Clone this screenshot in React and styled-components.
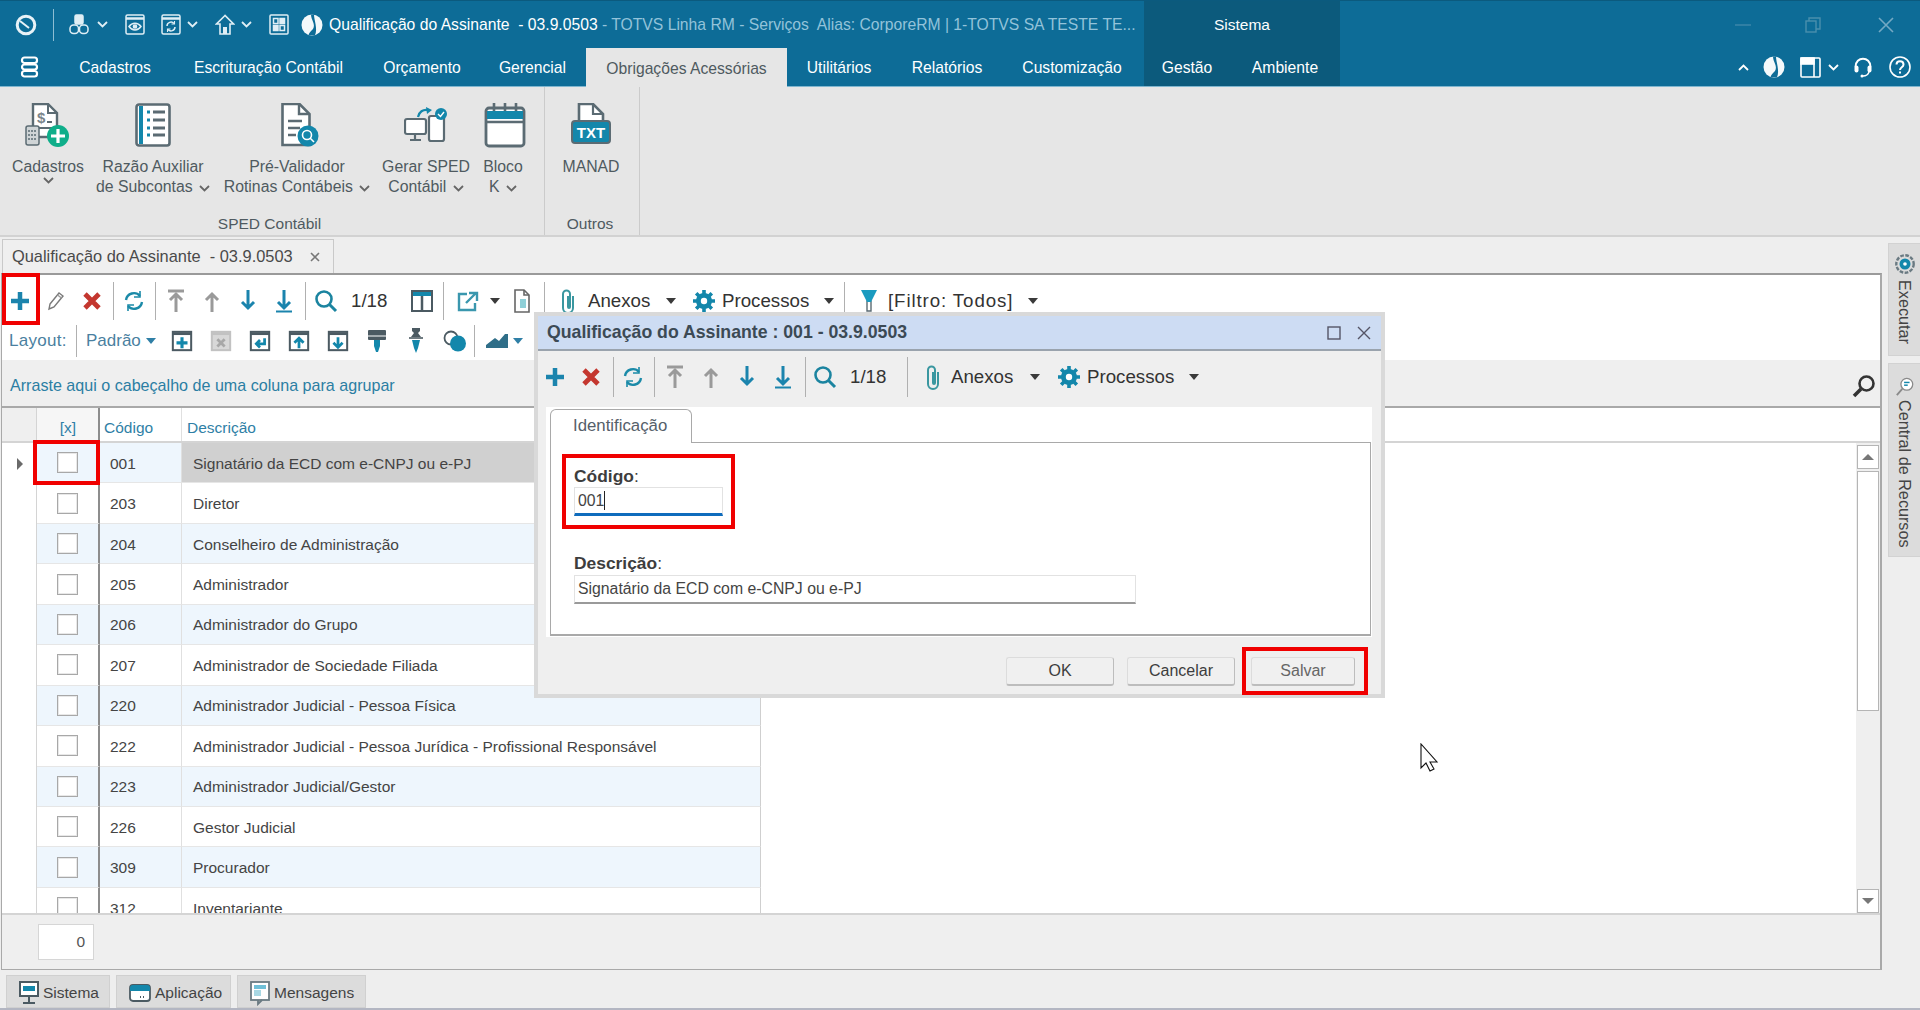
import React from 'react';
import styled, { createGlobalStyle } from 'styled-components';

const FONT = '"Liberation Sans", Arial, sans-serif';
const TEAL = '#1387ab';
const SLATE = '#5b6b73';

const Global = createGlobalStyle`
  html, body { margin: 0; padding: 0; background: #eee; }
  * { box-sizing: border-box; }
  body { font-family: ${FONT}; font-size: 15.5px; color: #444; overflow: hidden; }
`;

const Page = styled.div`
  position: relative;
  width: 1920px;
  height: 1010px;
  overflow: hidden;
  display: flex;
  flex-direction: column;
`;

// Title bar + ribbon tabs
const Head = styled.div`
  position: relative;
  height: 87px;
  background: #0d6c97;
  border-top: 1px solid #0b5a7e;
  border-bottom: 1px solid #7fb6cf;
  flex: none;
`;
const ContextBlock = styled.div`
  position: absolute;
  left: 1144px;
  top: 0;
  width: 196px;
  height: 85px;
  background: #0c5a7c;
`;
const TitleRow = styled.div`
  position: relative;
  height: 47px;
  display: flex;
  align-items: center;
  color: #fff;
  white-space: nowrap;
`;
const Slot = styled.div`
  width: ${(p) => p.$w || 36}px;
  margin-left: ${(p) => p.$ml || 0}px;
  flex: none;
  display: flex;
  align-items: center;
  justify-content: center;
`;
const HeadSep = styled.div`
  width: 1px;
  height: 32px;
  background: #8dbdd3;
  flex: none;
`;
const TitleText = styled.div`
  width: 815px;
  flex: none;
  font-size: 15.7px;
  overflow: hidden;
  color: #fff;
  span { color: #93c3da; }
`;
const ContextLabel = styled.div`
  width: 196px;
  flex: none;
  text-align: center;
  font-size: 15.5px;
  color: #fff;
`;
const TabRow = styled.div`
  position: relative;
  height: 38px;
  display: flex;
  align-items: stretch;
`;
const RibbonTab = styled.div`
  width: ${(p) => p.$w}px;
  flex: none;
  display: flex;
  align-items: center;
  justify-content: center;
  padding-top: 2px;
  font-size: 15.7px;
  white-space: nowrap;
  color: ${(p) => (p.$active ? '#4f5a60' : '#fff')};
  background: ${(p) => (p.$active ? '#e6e6e6' : 'transparent')};
  height: ${(p) => (p.$active ? '39px' : 'auto')};
`;

// Ribbon
const Ribbon = styled.div`
  height: 150px;
  flex: none;
  background: #e6e6e6;
  border-bottom: 2px solid #d2d2d2;
  display: flex;
`;
const Group = styled.div`
  width: ${(p) => p.$w}px;
  flex: none;
  border-right: 1px solid #cbcbcb;
  display: flex;
  flex-direction: column;
`;
const GroupItems = styled.div`
  flex: 1;
  display: flex;
`;
const GroupLabel = styled.div`
  height: 23px;
  text-align: center;
  font-size: 15.5px;
  color: #4f5a60;
  line-height: 23px;
  padding-right: ${(p) => p.$pr || 0}px;
`;
const RibbonButton = styled.div`
  width: ${(p) => p.$w}px;
  flex: none;
  display: flex;
  flex-direction: column;
  align-items: center;
  padding-top: 16px;
  color: #4f5a60;
  font-size: 15.8px;
  line-height: 20px;
  text-align: center;
  white-space: nowrap;
`;
const RibbonIcon = styled.div`
  height: 44px;
  margin-bottom: 10px;
  margin-left: ${(p) => p.$ml || 0}px;
  display: flex;
  align-items: center;
`;

// Work area
const Work = styled.div`
  flex: 1;
  display: flex;
  min-height: 0;
`;
const WorkMain = styled.div`
  width: 1882px;
  flex: none;
  display: flex;
  flex-direction: column;
`;
const DocStrip = styled.div`
  height: 36px;
  flex: none;
  padding-left: 2px;
  padding-top: 2px;
  display: flex;
`;
const DocTab = styled.div`
  width: 332px;
  border: 1px solid #c9c9c9;
  border-bottom: none;
  background: #efefef;
  display: flex;
  align-items: center;
  padding: 0 12px 0 9px;
  justify-content: space-between;
  font-size: 16.4px;
  color: #4a4a4a;
`;
const Panel = styled.div`
  height: 697px;
  flex: none;
  margin-left: 1px;
  display: flex;
  flex-direction: column;
  border: 2px solid #a9a9a9;
  border-top-color: #9a9a9a;
  border-bottom-width: 1px;
  border-left-width: 1px;
  background: #fff;
`;
const Toolbar = styled.div`
  height: ${(p) => p.$h}px;
  padding-top: ${(p) => p.$pt || 0}px;
  padding-bottom: ${(p) => p.$pb || 0}px;
  flex: none;
  display: flex;
  align-items: center;
  background: ${(p) => p.$bg || '#fff'};
  color: #333;
  font-size: 18.7px;
  white-space: nowrap;
`;
const Sep = styled.div`
  width: 1px;
  height: ${(p) => p.$h || 38}px;
  background: #b0b0b0;
  flex: none;
  margin: 0 ${(p) => p.$r ?? 2}px 0 ${(p) => p.$l ?? 3}px;
`;
const ToolText = styled.div`
  flex: none;
  width: ${(p) => p.$w}px;
  margin-left: ${(p) => p.$ml || 0}px;
  letter-spacing: ${(p) => p.$ls || 0}px;
`;
const Caret = styled.span`
  flex: none;
  width: 0;
  height: 0;
  border-left: 5px solid transparent;
  border-right: 5px solid transparent;
  border-top: 6px solid ${(p) => p.$color || '#3a3a3a'};
  margin-left: ${(p) => p.$ml || 0}px;
`;
const LayoutLabel = styled.div`
  flex: none;
  color: #4a7f9f;
  font-size: 17px;
  width: ${(p) => p.$w}px;
  margin-left: ${(p) => p.$ml || 0}px;
  letter-spacing: ${(p) => p.$ls || 0}px;
`;
const GroupBar = styled.div`
  height: 48px;
  flex: none;
  background: #efefef;
  border-bottom: 2px solid #a9a9a9;
  display: flex;
  align-items: center;
  justify-content: space-between;
  padding: 5px 4px 0 8px;
  font-size: 16.1px;
  color: #2b7ea3;
`;
const HeaderRow = styled.div`
  height: 35px;
  flex: none;
  display: grid;
  grid-template-columns: 35px 63px 82px 1fr;
  border-bottom: 2px solid #d4d4d4;
  background: #fff;
  font-size: 15.5px;
  color: #2f7fa6;
`;
const HeaderCell = styled.div`
  display: flex;
  align-items: center;
  padding-left: ${(p) => p.$pl || 4}px;
  padding-top: 6px;
  justify-content: ${(p) => (p.$center ? 'center' : 'flex-start')};
  background: ${(p) => p.$bg || '#fff'};
  border-right: ${(p) => p.$line || 'none'};
`;
const Body = styled.div`
  height: 470px;
  flex: none;
  display: flex;
  overflow: hidden;
`;
const Rows = styled.div`
  flex: 1;
  overflow: hidden;
  background: #fff;
`;
const Row = styled.div`
  display: grid;
  grid-template-columns: 35px 63px 82px 579px;
  height: 40.45px;
  background: #fff;
`;
const Cell = styled.div`
  display: flex;
  align-items: center;
  padding-left: ${(p) => p.$pl || 0}px;
  padding-top: ${(p) => (p.$center ? 0 : 2)}px;
  justify-content: ${(p) => (p.$center ? 'center' : 'flex-start')};
  background: ${(p) => (p.$selected ? '#d0d0d0' : p.$alt ? '#eef6fd' : '#fff')};
  border-bottom: 1px solid #e6e6e6;
  border-right: ${(p) => p.$line || 'none'};
  color: #444;
`;
const Indicator = styled(Cell)`
  background: #fff;
  border-bottom: none;
  border-right: 1px solid #d4d4d4;
`;
const Check = styled.span`
  width: 21px;
  height: 21px;
  background: #fff;
  border: 1px solid #a8a8a8;
  box-shadow: inset 0 0 0 1px #e8e8e8;
`;
const RowArrow = styled.span`
  width: 0;
  height: 0;
  border-top: 6px solid transparent;
  border-bottom: 6px solid transparent;
  border-left: 6px solid #6a6a6a;
  margin-left: 15px;
`;
const Scrollbar = styled.div`
  width: 24px;
  flex: none;
  background: #efefef;
  display: flex;
  flex-direction: column;
  padding: 2px 1px 0 1px;
`;
const ScrollBtn = styled.div`
  height: 24px;
  flex: none;
  background: #fff;
  border: 1px solid #b5b5b5;
  display: flex;
  align-items: center;
  justify-content: center;
  color: #6d6d6d;
`;
const ScrollThumb = styled.div`
  height: 240px;
  flex: none;
  margin-top: 2px;
  background: #fff;
  border: 1px solid #b5b5b5;
`;
const ScrollTrack = styled.div`
  flex: 1;
`;
const Arrow = styled.span`
  width: 0;
  height: 0;
  border-left: 6px solid transparent;
  border-right: 6px solid transparent;
  ${(p) => (p.$up ? 'border-bottom: 6px solid #777;' : 'border-top: 6px solid #777;')}
`;
const Footer = styled.div`
  flex: 1;
  background: #efefef;
  border-top: 2px solid #d4d4d4;
  padding: 9px 0 0 36px;
`;
const TotalBox = styled.div`
  width: 56px;
  height: 36px;
  background: #fff;
  border: 1px solid #d6d6d6;
  display: flex;
  align-items: center;
  justify-content: flex-end;
  padding-right: 8px;
  font-size: 15.5px;
  color: #555;
`;
const StatusTabs = styled.div`
  flex: 1;
  display: flex;
  gap: 6px;
  padding: 5px 0 0 6px;
`;
const StatusTab = styled.div`
  width: ${(p) => p.$w}px;
  background: #dcdcdc;
  display: flex;
  align-items: center;
  padding-left: 11px;
  padding-top: 2px;
  gap: 3px;
  font-size: 15.5px;
  color: #444;
  height: 33px;
  border: 1px solid #d0d0d0;
`;
const BottomLine = styled.div`
  height: 2px;
  flex: none;
  background: #b3b6c2;
`;
const Side = styled.div`
  margin-left: 6px;
  width: 32px;
  flex: none;
  padding-top: 6px;
  display: flex;
  flex-direction: column;
  gap: 7px;
`;
const SideTab = styled.div`
  height: ${(p) => p.$h}px;
  background: #dcdcdc;
  border: 1px solid #d2d2d2;
  border-right: none;
  display: flex;
  flex-direction: column;
  align-items: center;
  padding-top: ${(p) => p.$pt}px;
  color: #444;
  font-size: 16.2px;
`;
const SideText = styled.div`
  writing-mode: vertical-rl;
  margin-top: ${(p) => p.$mt}px;
  white-space: nowrap;
`;

// Floating dialog
const Dialog = styled.div`
  position: absolute;
  left: 534px;
  top: 312px;
  width: 851px;
  height: 386px;
  border: 4px solid #d9d9d9;
  background: #efefef;
  display: flex;
  flex-direction: column;
`;
const DialogTitle = styled.div`
  height: 35px;
  flex: none;
  background: #cddcf3;
  border-bottom: 2px solid #9aa3ad;
  display: flex;
  align-items: center;
  justify-content: space-between;
  padding: 0 10px 0 9px;
  font-weight: bold;
  font-size: 17.7px;
  color: #3c4a55;
`;
const DialogControls = styled.div`
  display: flex;
  align-items: center;
  gap: 16px;
`;
const DialogPanel = styled.div`
  height: 230px;
  flex: none;
  margin: 0 9px 0 8px;
  background: #fff;
  padding: 2px 0 0 4px;
  display: flex;
  flex-direction: column;
`;
const PanelTab = styled.div`
  width: 142px;
  height: 34px;
  flex: none;
  border: 1px solid #a9a9a9;
  border-bottom: none;
  border-radius: 6px 6px 0 0;
  background: #fff;
  position: relative;
  z-index: 1;
  margin-bottom: -1px;
  padding: 6px 0 0 22px;
  font-size: 16.8px;
  color: #55606a;
`;
const PanelBody = styled.div`
  flex: 1;
  margin-right: 1px;
  margin-bottom: 1px;
  border: 1px solid #a9a9a9;
  border-bottom-width: 2px;
  padding: 24px 0 0 23px;
  display: flex;
  flex-direction: column;
`;
const FieldLabel = styled.div`
  font-weight: bold;
  font-size: 17.4px;
  line-height: 18px;
  color: #3d3d3d;
  span { font-weight: normal; }
`;
const Input = styled.div`
  width: ${(p) => p.$w}px;
  height: 29px;
  margin-top: ${(p) => p.$mt || 2}px;
  margin-bottom: ${(p) => p.$mb || 0}px;
  background: #fff;
  border: 1px solid #e2e2e2;
  border-bottom: ${(p) => (p.$focus ? '3px solid #0f6cbd' : '2px solid #9a9a9a')};
  padding: 0 3px;
  display: flex;
  align-items: center;
  font-size: 15.8px;
  color: #444;
`;
const Cursor = styled.span`
  width: 1px;
  height: 19px;
  background: #222;
`;
const DialogButtons = styled.div`
  flex: 1;
  display: flex;
  justify-content: flex-end;
  gap: 13px;
  padding: 20px 26px 0 0;
`;
const Button = styled.div`
  width: ${(p) => p.$w}px;
  height: 29px;
  background: #f0f0f0;
  border: 1px solid #dcdcdc;
  border-right-color: #bdbdbd;
  border-bottom: 2px solid #bdbdbd;
  border-radius: 3px;
  display: flex;
  align-items: center;
  justify-content: center;
  font-size: 16px;
  color: ${(p) => (p.$dim ? '#666' : '#3d3d3d')};
  margin-left: ${(p) => p.$ml || 0}px;
`;
const RedBox = styled.div`
  position: absolute;
  left: ${(p) => p.$x}px;
  top: ${(p) => p.$y}px;
  width: ${(p) => p.$w}px;
  height: ${(p) => p.$h}px;
  border: 4px solid #f00000;
  pointer-events: none;
`;
const MouseCursor = styled.svg`
  position: absolute;
  left: 1420px;
  top: 743px;
`;

// --- icons ---
const Chevron = ({ color = '#fff', up, ml = 0 }) => (
  <svg width="11" height="7" viewBox="0 0 11 7" style={{ marginLeft: ml, flex: 'none' }}>
    <path d={up ? 'M1 6l4.5-4.5L10 6' : 'M1 1l4.5 4.5L10 1'} fill="none" stroke={color} strokeWidth="1.8" />
  </svg>
);
const LogoRing = () => (
  <svg width="22" height="22" viewBox="0 0 22 22">
    <circle cx="11" cy="11" r="8.8" fill="none" stroke="#e8f2f7" strokeWidth="3" />
    <path d="M5 7l9 7" stroke="#e8f2f7" strokeWidth="2" />
  </svg>
);
const OrgIcon = () => (
  <svg width="20" height="21" viewBox="0 0 20 21" fill="none" stroke="#dfeef5" strokeWidth="1.5">
    <rect x="6" y="1" width="8" height="9" rx="1.5" fill="#dfeef5" />
    <rect x="1" y="11" width="8.5" height="8.5" rx="3.5" />
    <rect x="10.5" y="11" width="8.5" height="8.5" rx="3.5" />
  </svg>
);
const DocEye = ({ refresh }) => (
  <svg width="20" height="21" viewBox="0 0 20 21" fill="none" stroke="#dfeef5" strokeWidth="1.5">
    <rect x="1" y="1" width="18" height="19" rx="1.5" />
    <path d="M1 4.5h18" strokeWidth="2.5" />
    {refresh ? (
      <>
        <path d="M6 12a4 4 0 0 1 7-2.5M14 13a4 4 0 0 1-7 2.5" />
        <path d="M13.5 7v3h-3M6.5 18v-3h3" strokeWidth="1.1" />
      </>
    ) : (
      <>
        <path d="M4 12.5c3-4.5 9-4.5 12 0-3 4.5-9 4.5-12 0z" />
        <circle cx="10" cy="12.5" r="1.6" fill="#dfeef5" />
      </>
    )}
  </svg>
);
const HomeIcon = () => (
  <svg width="20" height="21" viewBox="0 0 20 21" fill="none" stroke="#dfeef5" strokeWidth="1.6">
    <path d="M10 1.5L1.5 10H5v10h10V10h3.5z" />
    <rect x="8" y="13" width="4" height="7" fill="#dfeef5" stroke="none" />
  </svg>
);
const GridDoc = () => (
  <svg width="20" height="21" viewBox="0 0 20 21" fill="none" stroke="#dfeef5" strokeWidth="1.5">
    <rect x="1" y="1" width="18" height="19" rx="1" />
    <rect x="4.5" y="4.5" width="4.5" height="5" />
    <rect x="11" y="4.5" width="4.5" height="5" fill="#dfeef5" />
    <rect x="4.5" y="11.5" width="4.5" height="5" fill="#dfeef5" />
    <rect x="11" y="11.5" width="4.5" height="5" />
  </svg>
);
const TotvsLogo = () => (
  <svg width="22" height="22" viewBox="0 0 22 22">
    <circle cx="11" cy="11" r="10.5" fill="#f4f9fb" />
    <path d="M10 0.5C10 6 15 10 12 15 10 17 8 19 7.5 21l6.5.2C17 15 13 6 13 0.5z" fill="#0d6c97" />
  </svg>
);
const StackIcon = () => (
  <svg width="19" height="22" viewBox="0 0 19 22" fill="none" stroke="#fff" strokeWidth="2.2">
    <rect x="2" y="1.5" width="15" height="5.5" rx="2.5" />
    <rect x="2" y="8.5" width="15" height="5" rx="2.5" />
    <rect x="2" y="15" width="15" height="5.5" rx="2.5" />
  </svg>
);
const LayoutIcon = () => (
  <svg width="21" height="21" viewBox="0 0 21 21" fill="none" stroke="#fff" strokeWidth="1.6">
    <rect x="1" y="1" width="19" height="19" rx="1" />
    <rect x="1" y="1" width="13" height="6" fill="#fff" />
    <path d="M14 1v19" />
  </svg>
);
const HeadsetIcon = () => (
  <svg width="22" height="22" viewBox="0 0 22 22" fill="none" stroke="#fff" strokeWidth="2">
    <path d="M3.5 11C3.5 0 18.5 0 18.5 11" />
    <path d="M17 16c-1 3-3 4-6 4" strokeWidth="1.4" />
    <rect x="2.5" y="9.5" width="4" height="7" rx="2" fill="#fff" stroke="none" />
    <rect x="15.5" y="9.5" width="4" height="7" rx="2" fill="#fff" stroke="none" />
    <circle cx="10" cy="20" r="1.5" fill="#fff" stroke="none" />
  </svg>
);
const HelpIcon = () => (
  <svg width="22" height="22" viewBox="0 0 22 22" fill="none" stroke="#fff" strokeWidth="1.6">
    <circle cx="11" cy="11" r="10" />
    <path d="M7.5 8.5c0-4.5 7-4.5 7 0 0 3-3.5 2.5-3.5 5.5" strokeWidth="2" />
    <path d="M11 15.5v2" strokeWidth="2" />
  </svg>
);
const WinMin = () => (
  <svg width="16" height="4" viewBox="0 0 16 4"><path d="M0 2h16" stroke="#3d86a8" strokeWidth="1.5" /></svg>
);
const WinRestore = () => (
  <svg width="16" height="16" viewBox="0 0 16 16" fill="none" stroke="#4a8fad" strokeWidth="1.4">
    <rect x="1" y="4" width="10" height="11" />
    <path d="M4 4V1h11v11h-4" />
  </svg>
);
const WinClose = () => (
  <svg width="16" height="16" viewBox="0 0 16 16"><path d="M1 1l14 14M15 1L1 15" stroke="#74a9c4" strokeWidth="1.6" /></svg>
);

const CadastrosIcon = () => (
  <svg width="46" height="44" viewBox="0 0 46 44">
    <path d="M8 1h15l9 9v24H8z" fill="#fff" stroke={SLATE} strokeWidth="2.4" />
    <path d="M23 1v9h9" fill="none" stroke={SLATE} strokeWidth="2" />
    <text x="12" y="20" fontSize="15" fontWeight="bold" fill="#7b868c" fontFamily={FONT}>$</text>
    <path d="M22 19h5M14 25h14" stroke={SLATE} strokeWidth="2" />
    <rect x="1" y="23" width="13" height="19" rx="2" fill="#cfd4d6" stroke={SLATE} strokeWidth="1.5" />
    <path d="M3 28h9M3 32h9M3 36h9" stroke={SLATE} strokeWidth="1.6" strokeDasharray="2 1" />
    <circle cx="33" cy="33" r="11" fill="#0fae8a" />
    <path d="M33 26v14M26 33h14" stroke="#fff" strokeWidth="3.2" />
  </svg>
);
const LedgerIcon = () => (
  <svg width="36" height="44" viewBox="0 0 36 44">
    <rect x="1.5" y="1.5" width="33" height="41" rx="2.5" fill="#fff" stroke={SLATE} strokeWidth="2.6" />
    <rect x="4" y="3" width="4" height="38" fill={TEAL} />
    <path d="M12 9h3M12 17h3M12 25h3M12 32h3" stroke={TEAL} strokeWidth="3" />
    <path d="M18 9h12M18 17h12M18 25h12M18 32h12" stroke={SLATE} strokeWidth="3" />
  </svg>
);
const ValidatorIcon = () => (
  <svg width="38" height="44" viewBox="0 0 38 44">
    <path d="M1.5 1h17l10 10v31h-27z" fill="#fff" stroke={SLATE} strokeWidth="2.6" />
    <path d="M18 1v10h10" fill="none" stroke={SLATE} strokeWidth="2.4" />
    <path d="M7 18h14M7 25h12M7 32h8" stroke={SLATE} strokeWidth="2.6" />
    <circle cx="27" cy="33" r="10.5" fill={TEAL} />
    <circle cx="26" cy="32" r="4.5" fill="none" stroke="#fff" strokeWidth="1.6" />
    <path d="M29 35l4 4" stroke="#fff" strokeWidth="1.6" />
  </svg>
);
const DevicesIcon = () => (
  <svg width="44" height="36" viewBox="0 0 44 36">
    <rect x="1" y="12" width="21" height="15" rx="2" fill="#fff" stroke={SLATE} strokeWidth="2.2" />
    <path d="M11 27v5M6 33h11" stroke={SLATE} strokeWidth="2.2" />
    <rect x="25" y="9" width="15" height="25" rx="2" fill="#fff" stroke={SLATE} strokeWidth="2.2" />
    <path d="M14 10c1-5 5-8 10-7" fill="none" stroke={TEAL} strokeWidth="2.2" />
    <path d="M22 0l6 3-5 4z" fill={TEAL} />
    <circle cx="37" cy="7" r="6" fill={TEAL} />
    <path d="M34 7l2.5 2.5L40 5" fill="none" stroke="#fff" strokeWidth="1.4" />
  </svg>
);
const CalendarIcon = () => (
  <svg width="42" height="46" viewBox="0 0 42 46">
    <rect x="2" y="6" width="38" height="38" rx="3" fill="#fff" stroke={SLATE} strokeWidth="2.8" />
    <rect x="3" y="9" width="36" height="8" fill={TEAL} />
    <path d="M3 20h36" stroke={SLATE} strokeWidth="2.4" />
    <path d="M10 1v8M21 1v8M32 1v8" stroke={SLATE} strokeWidth="2.6" />
  </svg>
);
const TxtIcon = () => (
  <svg width="42" height="44" viewBox="0 0 42 44">
    <path d="M9 1h14l10 10v14H9z" fill="#fff" stroke={SLATE} strokeWidth="2.6" />
    <path d="M23 1v10h10" fill="none" stroke={SLATE} strokeWidth="2.2" />
    <rect x="2" y="18" width="38" height="22" rx="3" fill={TEAL} stroke={SLATE} strokeWidth="2" />
    <text x="21" y="35" textAnchor="middle" fontSize="15" fontWeight="bold" fill="#fff" fontFamily={FONT}>TXT</text>
  </svg>
);

const PlusIcon = () => (
  <svg width="20" height="20" viewBox="0 0 20 20"><path d="M10 1v18M1 10h18" stroke="#1b84ad" strokeWidth="4.5" /></svg>
);
const CrossIcon = () => (
  <svg width="20" height="20" viewBox="0 0 20 20"><path d="M3 3l14 14M17 3L3 17" stroke="#c4372f" strokeWidth="4.8" /></svg>
);
const PencilIcon = () => (
  <svg width="18" height="20" viewBox="0 0 18 20" fill="none" stroke="#7a7a7a" strokeWidth="1.4">
    <path d="M3 13L12 2l4 3-9 11-5 2z" />
    <path d="M10.5 4l4 3" stroke="#999" />
  </svg>
);
const RefreshIcon = () => (
  <svg width="22" height="22" viewBox="0 0 22 22" fill="none" stroke="#1b8aa8" strokeWidth="2.4">
    <path d="M3 10a8 8 0 0 1 14-4" />
    <path d="M19 12a8 8 0 0 1-14 4" />
    <path d="M17 1v6h-6M5 21v-6h6" strokeWidth="1.6" />
  </svg>
);
const ArrowIcon = ({ dir, color, bar }) => (
  <svg width="18" height="24" viewBox="0 0 18 24" fill="none" stroke={color} strokeWidth="3">
    {dir === 'up' ? <path d="M9 23V6M3 11l6-6 6 6" /> : <path d="M9 1v17M3 13l6 6 6-6" />}
    {bar === 'top' && <path d="M1 2h16" />}
    {bar === 'bottom' && <path d="M1 22.5h16" strokeWidth="2" />}
  </svg>
);
const SearchIcon = () => (
  <svg width="24" height="24" viewBox="0 0 24 24" fill="none" stroke="#1b84a0" strokeWidth="2.6">
    <circle cx="10" cy="10" r="7.5" />
    <path d="M15.5 15.5l6.5 6.5" strokeWidth="3" />
  </svg>
);
const ColumnsIcon = () => (
  <svg width="22" height="22" viewBox="0 0 22 22" fill="none" stroke="#4b5a62" strokeWidth="2">
    <rect x="1" y="1" width="20" height="20" />
    <path d="M11 1v20" strokeWidth="2.5" />
    <rect x="2" y="2" width="18" height="4" fill="#1387ab" stroke="none" />
  </svg>
);
const ExportIcon = () => (
  <svg width="22" height="22" viewBox="0 0 22 22" fill="none" stroke="#3a97ae" strokeWidth="2.4">
    <path d="M18 13v7H2V4h8" />
    <path d="M9 13l10-10M12 3h8v8" />
  </svg>
);
const SmallDoc = () => (
  <svg width="18" height="24" viewBox="0 0 18 24" fill="none" stroke="#666" strokeWidth="1.6">
    <path d="M2 1h9l5 5v17H2z" />
    <path d="M11 1v5h5" />
    <rect x="7" y="10" width="6" height="9" fill="#8fd0d8" stroke="none" />
  </svg>
);
const ClipIcon = () => (
  <svg width="16" height="26" viewBox="0 0 16 26" fill="none" stroke="#3a97a0" strokeWidth="2">
    <path d="M13 8v12a5 5 0 0 1-10 0V6a3.5 3.5 0 0 1 7 0v13a1 1 0 0 1-2 0V8" />
  </svg>
);
const GearIcon = () => (
  <svg width="22" height="22" viewBox="0 0 22 22">
    <circle cx="11" cy="11" r="8" fill={TEAL} />
    <path d="M11 0v5M11 17v5M0 11h5M17 11h5M3.2 3.2l3.5 3.5M15.3 15.3l3.5 3.5M18.8 3.2l-3.5 3.5M6.7 15.3l-3.5 3.5" stroke={TEAL} strokeWidth="3.6" />
    <circle cx="11" cy="11" r="3.2" fill="#fff" />
  </svg>
);
const FunnelIcon = () => (
  <svg width="18" height="24" viewBox="0 0 18 24">
    <path d="M7 12h4v10H7z" fill="#fff" stroke="#5b6b73" strokeWidth="1.4" />
    <path d="M1 1h16l-6 12H7z" fill="#1a9bc0" />
  </svg>
);
const SheetIcon = ({ glyph, dim }) => {
  const c = dim ? '#c2c2c2' : '#4b5a62';
  const g = dim ? '#a8a8a8' : '#1387ab';
  return (
    <svg width="22" height="22" viewBox="0 0 24 24" fill="none" stroke={c} strokeWidth="2.2">
      <rect x="2" y="2" width="20" height="20" fill={dim ? '#d8d8d8' : '#fff'} />
      <path d="M2 4h20" strokeWidth="3" />
      {glyph === 'plus' && <path d="M12 8v12M6 14h12" stroke={g} strokeWidth="3.4" />}
      {glyph === 'x' && <path d="M8 10l8 8M16 10l-8 8" stroke={g} strokeWidth="3" />}
      {glyph === 'enter' && <path d="M17 9v6H9M12 11l-4 4 4 4" stroke={g} strokeWidth="3" />}
      {glyph === 'up' && <path d="M12 20V10M7 14l5-5 5 5" stroke={g} strokeWidth="3" />}
      {glyph === 'down' && <path d="M12 8v10M7 14l5 5 5-5" stroke={g} strokeWidth="3" />}
    </svg>
  );
};
const BrushIcon = () => (
  <svg width="20" height="26" viewBox="0 0 20 26">
    <rect x="1" y="2" width="18" height="10" rx="1" fill="#4b5a62" />
    <path d="M1 8h18" stroke="#fff" strokeWidth="1" />
    <path d="M7 12h6v6l-2 6H9l-2-6z" fill={TEAL} />
  </svg>
);
const PinIcon = () => (
  <svg width="16" height="28" viewBox="0 0 16 28">
    <path d="M4 1h8v3l-2 2 3 4H3l3-4-2-2z" fill="#4b5a62" />
    <path d="M1 11h14" stroke="#4b5a62" strokeWidth="1.6" />
    <path d="M4 13h8l-2 8-2 5-2-5z" fill={TEAL} />
  </svg>
);
const DropsIcon = () => (
  <svg width="24" height="22" viewBox="0 0 24 22">
    <circle cx="8" cy="8" r="6.5" fill="#fff" stroke="#4b5a62" strokeWidth="1.8" />
    <circle cx="15" cy="13.5" r="8" fill={TEAL} />
  </svg>
);
const ChartIcon = () => (
  <svg width="22" height="14" viewBox="0 0 22 14">
    <path d="M0 14v-3L9 4l4 3 6-7h3v14z" fill="#2f6e88" />
  </svg>
);
const GlassBig = () => (
  <svg width="24" height="24" viewBox="0 0 24 24" fill="none" stroke="#333" strokeWidth="2.6">
    <circle cx="14.5" cy="9.5" r="7" />
    <path d="M9 15l-7 7" strokeWidth="3.6" />
  </svg>
);
const ExecGear = () => (
  <svg width="22" height="22" viewBox="0 0 24 24">
    <circle cx="12" cy="12" r="9.5" fill="none" stroke="#6a7a82" strokeWidth="2.6" strokeDasharray="4 1.6" />
    <circle cx="12" cy="12" r="6" fill={TEAL} />
    <circle cx="12" cy="12" r="2" fill="#fff" />
  </svg>
);
const CentralGlass = () => (
  <svg width="20" height="20" viewBox="0 0 22 22" fill="none">
    <circle cx="13" cy="8" r="6.5" stroke="#8a8a8a" strokeWidth="1.4" fill="#fff" />
    <path d="M8 13l-6 7" stroke="#8a8a8a" strokeWidth="2" />
    <path d="M10 6h6" stroke={TEAL} strokeWidth="1.6" />
    <path d="M10 9h4" stroke={TEAL} strokeWidth="1.6" />
  </svg>
);
const MonitorIcon = () => (
  <svg width="22" height="26" viewBox="0 0 22 26" fill="none" stroke="#4b5a62" strokeWidth="2">
    <rect x="2" y="2" width="18" height="14" fill="#fff" />
    <rect x="5" y="6" width="12" height="5" fill={TEAL} stroke="none" />
    <path d="M11 16v6M5 23h12" />
  </svg>
);
const AppIcon = () => (
  <svg width="24" height="22" viewBox="0 0 24 22" fill="none" stroke="#4b5a62" strokeWidth="1.8">
    <rect x="2" y="3" width="20" height="16" rx="3" fill="#fff" />
    <path d="M2 9V6a3 3 0 0 1 3-3h14a3 3 0 0 1 3 3v3z" fill={TEAL} stroke="none" />
    <path d="M12 15h1M15 15h1" stroke="#4b5a62" />
  </svg>
);
const MessageIcon = () => (
  <svg width="22" height="26" viewBox="0 0 22 26" fill="none" stroke="#6a7a82" strokeWidth="1.8">
    <rect x="2" y="2" width="18" height="18" fill="#fff" />
    <rect x="5" y="5" width="12" height="4" fill="#6fc0d8" stroke="none" />
    <rect x="5" y="10" width="7" height="6" fill="#a8d8e4" stroke="none" />
    <path d="M9 20v4l4-4" />
  </svg>
);

const rows = [
  ['001', 'Signatário da ECD com e-CNPJ ou e-PJ'],
  ['203', 'Diretor'],
  ['204', 'Conselheiro de Administração'],
  ['205', 'Administrador'],
  ['206', 'Administrador do Grupo'],
  ['207', 'Administrador de Sociedade Filiada'],
  ['220', 'Administrador Judicial - Pessoa Física'],
  ['222', 'Administrador Judicial - Pessoa Jurídica - Profissional Responsável'],
  ['223', 'Administrador Judicial/Gestor'],
  ['226', 'Gestor Judicial'],
  ['309', 'Procurador'],
  ['312', 'Inventariante'],
];

function NavTools() {
  return (
    <>
      <Slot><ArrowIcon dir="up" color="#9a9a9a" bar="top" /></Slot>
      <Slot><ArrowIcon dir="up" color="#9a9a9a" /></Slot>
      <Slot><ArrowIcon dir="down" color="#1b84ad" /></Slot>
      <Slot><ArrowIcon dir="down" color="#1b84ad" bar="bottom" /></Slot>
    </>
  );
}

export default function App() {
  return (
    <Page>
      <Global />
      <Head>
        <ContextBlock />
        <TitleRow>
          <Slot $w={22} $ml={15}><LogoRing /></Slot>
          <Slot $w={16} />
          <HeadSep />
          <Slot $w={20} $ml={15}><OrgIcon /></Slot>
          <Chevron color="#dfeef5" ml={8} />
          <Slot $w={20} $ml={17}><DocEye /></Slot>
          <Slot $w={20} $ml={16}><DocEye refresh /></Slot>
          <Chevron color="#dfeef5" ml={6} />
          <Slot $w={20} $ml={17}><HomeIcon /></Slot>
          <Chevron color="#dfeef5" ml={6} />
          <Slot $w={20} $ml={17}><GridDoc /></Slot>
          <Slot $w={22} $ml={12}><TotvsLogo /></Slot>
          <Slot $w={6} />
          <TitleText>
            Qualificação do Assinante&nbsp; - 03.9.0503<span> - TOTVS Linha RM - Serviços&nbsp; Alias: CorporeRM | 1-TOTVS SA TESTE TE...</span>
          </TitleText>
          <ContextLabel>Sistema</ContextLabel>
          <Slot $w={40} $ml={383}><WinMin /></Slot>
          <Slot $w={40} $ml={30}><WinRestore /></Slot>
          <Slot $w={40} $ml={33}><WinClose /></Slot>
        </TitleRow>
        <TabRow>
          <Slot $w={58}><StackIcon /></Slot>
          <RibbonTab $w={114}>Cadastros</RibbonTab>
          <RibbonTab $w={193}>Escrituração Contábil</RibbonTab>
          <RibbonTab $w={114}>Orçamento</RibbonTab>
          <RibbonTab $w={107}>Gerencial</RibbonTab>
          <RibbonTab $w={201} $active>Obrigações Acessórias</RibbonTab>
          <RibbonTab $w={104}>Utilitários</RibbonTab>
          <RibbonTab $w={112}>Relatórios</RibbonTab>
          <RibbonTab $w={138}>Customização</RibbonTab>
          <RibbonTab $w={92}>Gestão</RibbonTab>
          <RibbonTab $w={104}>Ambiente</RibbonTab>
          <Slot $w={20} $ml={396}><Chevron up /></Slot>
          <Slot $w={32} $ml={5}><TotvsLogo /></Slot>
          <Slot $w={34} $ml={3}><LayoutIcon /></Slot>
          <Slot $w={11} $ml={1}><Chevron /></Slot>
          <Slot $w={28} $ml={10}><HeadsetIcon /></Slot>
          <Slot $w={30} $ml={8}><HelpIcon /></Slot>
        </TabRow>
      </Head>

      <Ribbon>
        <Group $w={545}>
          <GroupItems>
            <RibbonButton $w={96}>
              <RibbonIcon><CadastrosIcon /></RibbonIcon>
              Cadastros
              <Chevron color="#666" />
            </RibbonButton>
            <RibbonButton $w={114}>
              <RibbonIcon><LedgerIcon /></RibbonIcon>
              Razão Auxiliar
              <div>de Subcontas <Chevron color="#666" ml={2} /></div>
            </RibbonButton>
            <RibbonButton $w={174}>
              <RibbonIcon $ml={6}><ValidatorIcon /></RibbonIcon>
              Pré-Validador
              <div>Rotinas Contábeis <Chevron color="#666" ml={2} /></div>
            </RibbonButton>
            <RibbonButton $w={84}>
              <RibbonIcon><DevicesIcon /></RibbonIcon>
              Gerar SPED
              <div>Contábil <Chevron color="#666" ml={2} /></div>
            </RibbonButton>
            <RibbonButton $w={70}>
              <RibbonIcon $ml={4}><CalendarIcon /></RibbonIcon>
              Bloco
              <div>K <Chevron color="#666" ml={2} /></div>
            </RibbonButton>
          </GroupItems>
          <GroupLabel $pr={5}>SPED Contábil</GroupLabel>
        </Group>
        <Group $w={95}>
          <GroupItems>
            <RibbonButton $w={92}>
              <RibbonIcon><TxtIcon /></RibbonIcon>
              MANAD
            </RibbonButton>
          </GroupItems>
          <GroupLabel $pr={4}>Outros</GroupLabel>
        </Group>
      </Ribbon>

      <Work>
        <WorkMain>
          <DocStrip>
            <DocTab>
              Qualificação do Assinante&nbsp; - 03.9.0503
              <svg width="12" height="12" viewBox="0 0 12 12"><path d="M2 2l8 8M10 2l-8 8" stroke="#777" strokeWidth="1.6" /></svg>
            </DocTab>
          </DocStrip>
          <Panel>
            <Toolbar $h={45} $pt={6}>
              <Slot><PlusIcon /></Slot>
              <Slot><PencilIcon /></Slot>
              <Slot><CrossIcon /></Slot>
              <Sep />
              <Slot><RefreshIcon /></Slot>
              <Sep />
              <NavTools />
              <Sep />
              <Slot><SearchIcon /></Slot>
              <ToolText $w={53} $ml={7}>1/18</ToolText>
              <Slot><ColumnsIcon /></Slot>
              <Sep />
              <Slot $w={40} $ml={2}><ExportIcon /></Slot>
              <Caret $ml={2} />
              <Slot $w={44}><SmallDoc /></Slot>
              <Sep $l={0} $r={5} />
              <Slot><ClipIcon /></Slot>
              <ToolText $w={78} $ml={2}>Anexos</ToolText>
              <Caret />
              <Slot $w={36} $ml={10}><GearIcon /></Slot>
              <ToolText $w={102}>Processos</ToolText>
              <Caret />
              <Sep $l={10} />
              <Slot $w={36} $ml={4}><FunnelIcon /></Slot>
              <ToolText $w={140} $ml={1} $ls={0.9}>[Filtro: Todos]</ToolText>
              <Caret />
            </Toolbar>
            <Toolbar $h={40} $pt={2}>
              <LayoutLabel $w={66} $ml={7} $ls={0.3}>Layout:</LayoutLabel>
              <Sep $l={1} $r={9} $h={32} />
              <LayoutLabel $w={58}>Padrão</LayoutLabel>
              <Caret $ml={2} $color="#2f7fa6" />
              <Slot $w={39} $ml={6}><SheetIcon glyph="plus" /></Slot>
              <Slot $w={39}><SheetIcon glyph="x" dim /></Slot>
              <Slot $w={39}><SheetIcon glyph="enter" /></Slot>
              <Slot $w={39}><SheetIcon glyph="up" /></Slot>
              <Slot $w={39}><SheetIcon glyph="down" /></Slot>
              <Slot $w={39}><BrushIcon /></Slot>
              <Slot $w={39}><PinIcon /></Slot>
              <Slot $w={39}><DropsIcon /></Slot>
              <Sep $l={0} $r={7} $h={32} />
              <Slot $w={30}><ChartIcon /></Slot>
              <Caret $ml={1} $color="#2f7fa6" />
            </Toolbar>
            <GroupBar>
              Arraste aqui o cabeçalho de uma coluna para agrupar
              <GlassBig />
            </GroupBar>
            <HeaderRow>
              <HeaderCell $bg="#efefef" $line="1px solid #d4d4d4" />
              <HeaderCell $center $pl={1} $bg="#f6f6f6" $line="2px solid #8d8d8d">[x]</HeaderCell>
              <HeaderCell $line="1px solid #e0e0e0">Código</HeaderCell>
              <HeaderCell $pl={5}>Descrição</HeaderCell>
            </HeaderRow>
            <Body>
              <Rows>
                {rows.map(([code, desc], i) => {
                  const alt = i % 2 === 0;
                  return (
                    <Row key={code}>
                      <Indicator>{i === 0 && <RowArrow />}</Indicator>
                      <Cell $center $alt={alt} $line="2px solid #8d8d8d"><Check /></Cell>
                      <Cell $alt={alt} $pl={10} $line="1px solid #e0e0e0">{code}</Cell>
                      <Cell $alt={alt} $pl={11} $selected={i === 0} $line="1px solid #cfcfcf">{desc}</Cell>
                    </Row>
                  );
                })}
              </Rows>
              <Scrollbar>
                <ScrollBtn><Arrow $up /></ScrollBtn>
                <ScrollThumb />
                <ScrollTrack />
                <ScrollBtn><Arrow /></ScrollBtn>
              </Scrollbar>
            </Body>
            <Footer>
              <TotalBox>0</TotalBox>
            </Footer>
          </Panel>
          <StatusTabs>
            <StatusTab $w={104}><MonitorIcon />Sistema</StatusTab>
            <StatusTab $w={115}><AppIcon />Aplicação</StatusTab>
            <StatusTab $w={129}><MessageIcon />Mensagens</StatusTab>
          </StatusTabs>
        </WorkMain>
        <Side>
          <SideTab $h={113} $pt={9}><ExecGear /><SideText $mt={5}>Executar</SideText></SideTab>
          <SideTab $h={194} $pt={13}><CentralGlass /><SideText $mt={3}>Central de Recursos</SideText></SideTab>
        </Side>
      </Work>
      <BottomLine />

      <Dialog>
        <DialogTitle>
          Qualificação do Assinante : 001 - 03.9.0503
          <DialogControls>
            <svg width="14" height="14" viewBox="0 0 14 14"><rect x="1" y="1" width="12" height="12" fill="none" stroke="#556" strokeWidth="1.4" /></svg>
            <svg width="14" height="14" viewBox="0 0 14 14"><path d="M1 1l12 12M13 1L1 13" stroke="#556" strokeWidth="1.4" /></svg>
          </DialogControls>
        </DialogTitle>
        <Toolbar $h={56} $pb={5} $bg="#efefef">
          <Slot $w={34}><PlusIcon /></Slot>
          <Slot $ml={1}><CrossIcon /></Slot>
          <Sep $l={4} $r={0} $h={40} />
          <Slot $w={38}><RefreshIcon /></Slot>
          <Sep $l={2} $r={2} $h={40} />
          <NavTools />
          <Sep $l={4} $r={2} $h={40} />
          <Slot $w={34}><SearchIcon /></Slot>
          <ToolText $w={55} $ml={8}>1/18</ToolText>
          <Sep $l={2} $r={7} $h={40} />
          <Slot><ClipIcon /></Slot>
          <ToolText $w={79}>Anexos</ToolText>
          <Caret />
          <Slot $w={36} $ml={11}><GearIcon /></Slot>
          <ToolText $w={102}>Processos</ToolText>
          <Caret />
        </Toolbar>
        <DialogPanel>
          <PanelTab>Identificação</PanelTab>
          <PanelBody>
            <FieldLabel>Código<span>:</span></FieldLabel>
            <Input $w={149} $focus $mb={38}>001<Cursor /></Input>
            <FieldLabel>Descrição<span>:</span></FieldLabel>
            <Input $w={562} $mt={3}>Signatário da ECD com e-CNPJ ou e-PJ</Input>
          </PanelBody>
        </DialogPanel>
        <DialogButtons>
          <Button $w={108}>OK</Button>
          <Button $w={108}>Cancelar</Button>
          <Button $w={104} $ml={3} $dim>Salvar</Button>
        </DialogButtons>
      </Dialog>

      <RedBox $x={2} $y={273} $w={38} $h={52} />
      <RedBox $x={33} $y={440} $w={67} $h={45} />
      <RedBox $x={562} $y={454} $w={173} $h={75} />
      <RedBox $x={1242} $y={647} $w={126} $h={48} />

      <MouseCursor width="20" height="30" viewBox="0 0 20 30">
        <path d="M1 1v24l5-5 4 8 4-2-4-7h7z" fill="#fff" stroke="#111" strokeWidth="1.1" />
      </MouseCursor>
    </Page>
  );
}
